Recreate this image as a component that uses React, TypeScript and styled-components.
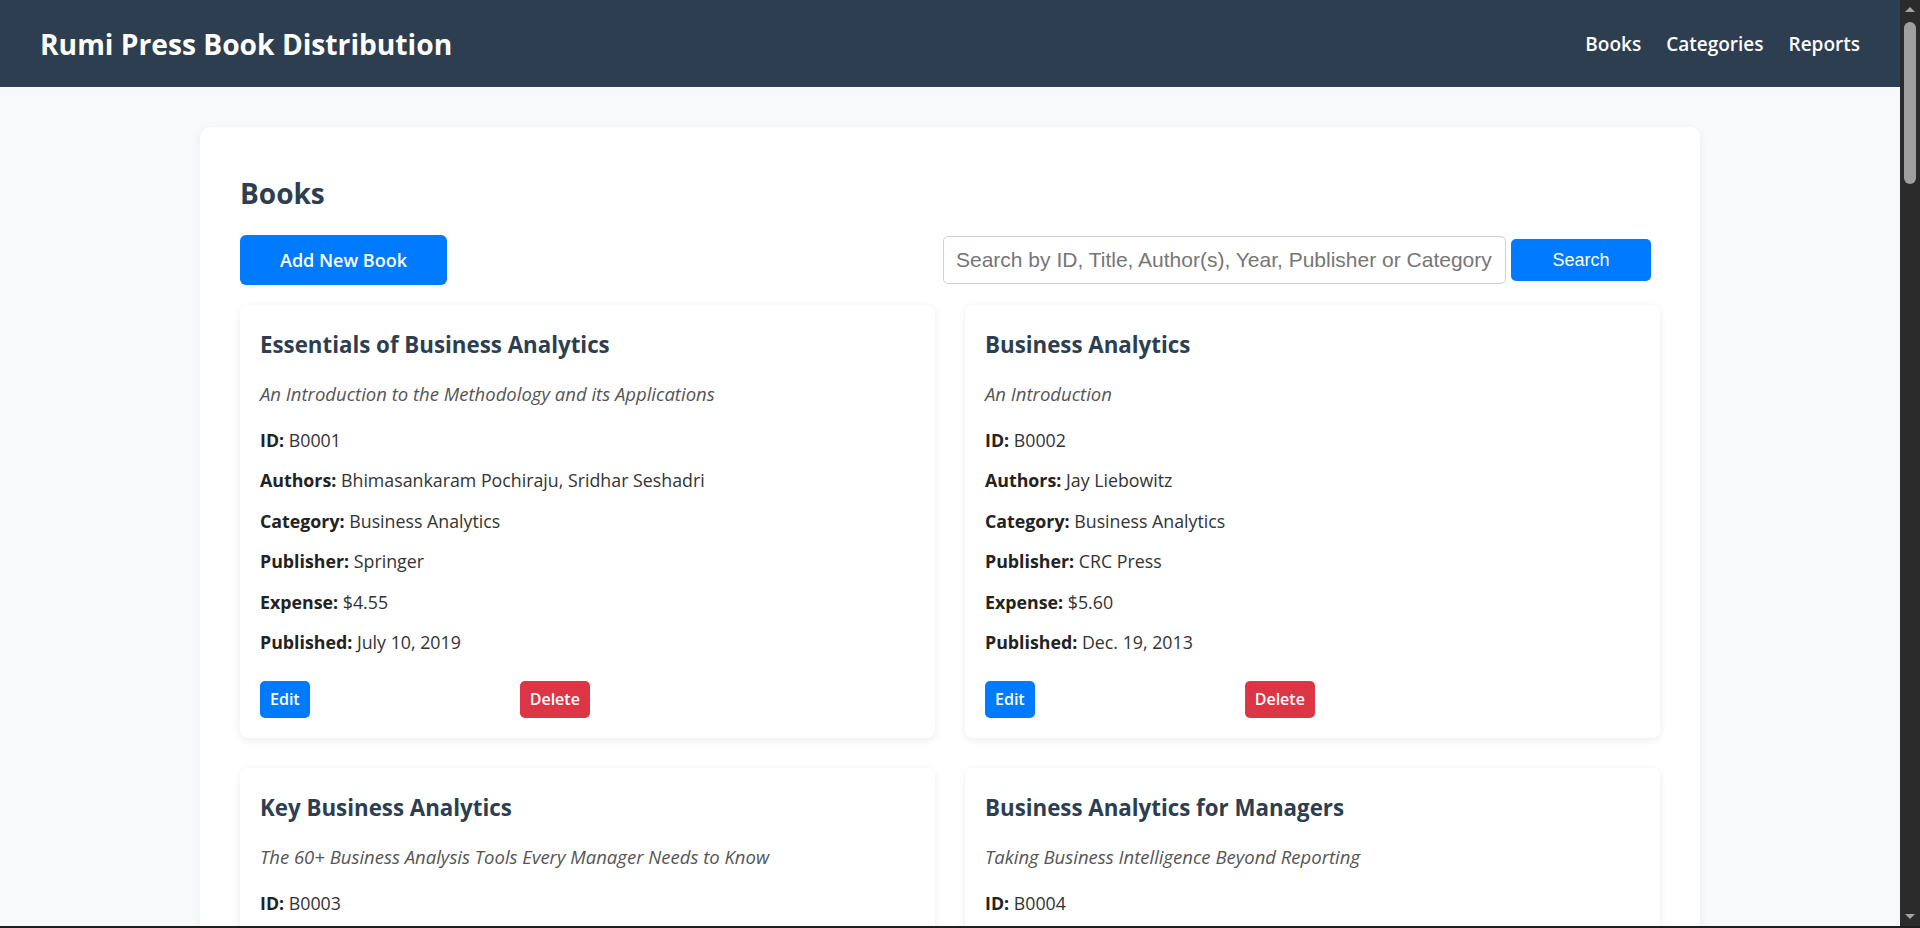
import React from "react";
import styled, { createGlobalStyle } from "styled-components";

const GlobalStyle = createGlobalStyle`
  html, body { margin: 0; padding: 0; }
  body {
    background: #f7f9fb;
    font-family: "Open Sans", "Noto Sans", sans-serif;
    color: #333;
  }
  *, *::before, *::after { box-sizing: border-box; }
`;

type Book = {
  id: string;
  title: string;
  subtitle: string;
  authors: string;
  category: string;
  publisher: string;
  expense: string;
  published: string;
};

const books: Book[] = [
  { id: "B0001", title: "Essentials of Business Analytics", subtitle: "An Introduction to the Methodology and its Applications", authors: "Bhimasankaram Pochiraju, Sridhar Seshadri", category: "Business Analytics", publisher: "Springer", expense: "4.55", published: "July 10, 2019" },
  { id: "B0002", title: "Business Analytics", subtitle: "An Introduction", authors: "Jay Liebowitz", category: "Business Analytics", publisher: "CRC Press", expense: "5.60", published: "Dec. 19, 2013" },
  { id: "B0003", title: "Key Business Analytics", subtitle: "The 60+ Business Analysis Tools Every Manager Needs to Know", authors: "Bernard Marr", category: "Business Analytics", publisher: "Pearson UK", expense: "6.10", published: "Feb. 4, 2016" },
  { id: "B0004", title: "Business Analytics for Managers", subtitle: "Taking Business Intelligence Beyond Reporting", authors: "Gert Laursen, Jesper Thorlund", category: "Business Analytics", publisher: "John Wiley & Sons", expense: "3.89", published: "Oct. 3, 2016" },
  { id: "B0005", title: "Data Science for Business", subtitle: "What You Need to Know about Data Mining and Data-Analytic Thinking", authors: "Foster Provost, Tom Fawcett", category: "Data Science", publisher: "O'Reilly Media", expense: "7.20", published: "July 27, 2013" },
  { id: "B0006", title: "Python for Data Analysis", subtitle: "Data Wrangling with Pandas, NumPy, and IPython", authors: "Wes McKinney", category: "Data Science", publisher: "O'Reilly Media", expense: "8.15", published: "Oct. 20, 2017" },
  { id: "B0007", title: "Storytelling with Data", subtitle: "A Data Visualization Guide for Business Professionals", authors: "Cole Nussbaumer Knaflic", category: "Data Visualization", publisher: "John Wiley & Sons", expense: "5.25", published: "Nov. 2, 2015" },
  { id: "B0008", title: "Competing on Analytics", subtitle: "The New Science of Winning", authors: "Thomas H. Davenport, Jeanne G. Harris", category: "Business Analytics", publisher: "Harvard Business Press", expense: "4.75", published: "March 6, 2007" },
  { id: "B0009", title: "Predictive Analytics", subtitle: "The Power to Predict Who Will Click, Buy, Lie, or Die", authors: "Eric Siegel", category: "Data Science", publisher: "John Wiley & Sons", expense: "6.40", published: "Feb. 19, 2013" },
  { id: "B0010", title: "Data Mining", subtitle: "Practical Machine Learning Tools and Techniques", authors: "Ian H. Witten, Eibe Frank, Mark A. Hall", category: "Data Science", publisher: "Morgan Kaufmann", expense: "9.05", published: "Jan. 20, 2011" },
  { id: "B0011", title: "The Visual Display of Quantitative Information", subtitle: "Second Edition", authors: "Edward R. Tufte", category: "Data Visualization", publisher: "Graphics Press", expense: "7.80", published: "Jan. 1, 2001" },
  { id: "B0012", title: "Big Data", subtitle: "A Revolution That Will Transform How We Live, Work, and Think", authors: "Viktor Mayer-Schönberger, Kenneth Cukier", category: "Big Data", publisher: "Houghton Mifflin Harcourt", expense: "3.95", published: "March 5, 2013" },
  { id: "B0013", title: "Business Intelligence Guidebook", subtitle: "From Data Integration to Analytics", authors: "Rick Sherman", category: "Business Intelligence", publisher: "Morgan Kaufmann", expense: "6.85", published: "Nov. 4, 2014" },
  { id: "B0014", title: "Marketing Analytics", subtitle: "Data-Driven Techniques with Microsoft Excel", authors: "Wayne L. Winston", category: "Marketing", publisher: "John Wiley & Sons", expense: "5.45", published: "Jan. 13, 2014" },
  { id: "B0015", title: "Naked Statistics", subtitle: "Stripping the Dread from the Data", authors: "Charles Wheelan", category: "Statistics", publisher: "W. W. Norton & Company", expense: "2.90", published: "Jan. 7, 2013" },
  { id: "B0016", title: "An Introduction to Statistical Learning", subtitle: "with Applications in R", authors: "Gareth James, Daniela Witten, Trevor Hastie, Robert Tibshirani", category: "Statistics", publisher: "Springer", expense: "8.60", published: "June 24, 2013" },
  { id: "B0017", title: "Data Smart", subtitle: "Using Data Science to Transform Information into Insight", authors: "John W. Foreman", category: "Data Science", publisher: "John Wiley & Sons", expense: "4.30", published: "Nov. 4, 2013" },
  { id: "B0018", title: "Lean Analytics", subtitle: "Use Data to Build a Better Startup Faster", authors: "Alistair Croll, Benjamin Yoskovitz", category: "Business Analytics", publisher: "O'Reilly Media", expense: "5.10", published: "March 21, 2013" },
  { id: "B0019", title: "Analytics at Work", subtitle: "Smarter Decisions, Better Results", authors: "Thomas H. Davenport, Jeanne G. Harris, Robert Morison", category: "Business Analytics", publisher: "Harvard Business Press", expense: "4.65", published: "Feb. 8, 2010" },
  { id: "B0020", title: "Data Analytics Made Accessible", subtitle: "A Practical Guide", authors: "Anil Maheshwari", category: "Business Analytics", publisher: "Lake Union", expense: "3.40", published: "May 1, 2014" },
];

const Page = styled.div`
  margin-right: 20px;
`;

const Header = styled.header`
  height: 87px;
  background: #2c3e50;
  display: flex;
  align-items: center;
  justify-content: space-between;
  padding: 0 40px;
`;

const Brand = styled.h1`
  margin: 0;
  color: #ffffff;
  font-size: 28.2px;
  font-weight: 700;
  line-height: 38px;
`;

const Nav = styled.nav`
  display: flex;
  align-items: center;
  gap: 25px;
`;

const NavLink = styled.a`
  color: #ffffff;
  font-size: 19px;
  font-weight: 600;
  text-decoration: none;
  line-height: 26px;
`;

const Main = styled.main`
  max-width: 1500px;
  margin: 40px auto 40px;
`;

const Panel = styled.section`
  background: #ffffff;
  border-radius: 10px;
  box-shadow: 0 2px 10px rgba(0, 0, 0, 0.05);
  padding: 40px;
`;

const PageTitle = styled.h2`
  margin: 7px 0 0;
  font-size: 28px;
  font-weight: 700;
  line-height: 38px;
  color: #2c3e50;
`;

const Toolbar = styled.div`
  display: flex;
  align-items: center;
  justify-content: space-between;
  margin-top: 23px;
  height: 50px;
`;

const PrimaryButton = styled.button`
  height: 50px;
  padding: 0 40px;
  border: none;
  border-radius: 6px;
  background: #007bff;
  color: #ffffff;
  font-family: "Open Sans", sans-serif;
  font-size: 18px;
  font-weight: 600;
  cursor: pointer;
`;

const SearchForm = styled.form`
  display: flex;
  align-items: center;
  gap: 5px;
  margin-right: 9px;
`;

const SearchInput = styled.input`
  width: 563px;
  height: 48px;
  padding: 0 3px 0 12px;
  border: 1px solid #d0d0d5;
  border-radius: 5px;
  font-family: "Liberation Sans", Arial, sans-serif;
  font-size: 21px;
  color: #333;
  outline: none;
  &::placeholder { color: #767676; }
`;

const SearchButton = styled.button`
  width: 140px;
  height: 42px;
  border: none;
  border-radius: 5px;
  background: #007bff;
  color: #ffffff;
  font-family: "Liberation Sans", Arial, sans-serif;
  font-size: 18px;
  cursor: pointer;
`;

const Grid = styled.div`
  display: grid;
  grid-template-columns: 1fr 1fr;
  gap: 30px;
  margin-top: 20px;
`;

const BookCard = styled.article`
  background: #ffffff;
  border-radius: 8px;
  box-shadow: 0 2px 8px rgba(0, 0, 0, 0.08);
  padding: 20px;
`;

const BookTitle = styled.h3`
  margin: 5px 0 0;
  font-size: 22.3px;
  font-weight: 700;
  line-height: 30px;
  color: #2c3e50;
`;

const Subtitle = styled.p`
  margin: 22px 0 0;
  font-size: 18.5px;
  font-style: italic;
  line-height: 24px;
  color: #555;
`;

const Details = styled.div`
  display: flex;
  flex-direction: column;
  gap: 16.4px;
  margin-top: 22px;
`;

const Detail = styled.p`
  margin: 0;
  font-size: 17.8px;
  line-height: 24px;
  color: #333;
`;

const Label = styled.strong`
  font-weight: 700;
  color: #222;
`;

const Actions = styled.div`
  display: flex;
  align-items: center;
  gap: 210px;
  margin-top: 27px;
`;

const SmallButton = styled.button<{ $variant: "edit" | "delete" }>`
  height: 37px;
  padding: 0 10px;
  border: none;
  border-radius: 5px;
  background: ${(p) => (p.$variant === "edit" ? "#007bff" : "#dc3545")};
  color: #ffffff;
  font-family: "Open Sans", sans-serif;
  font-size: 16px;
  font-weight: 600;
  cursor: pointer;
`;

const ScrollRail = styled.div`
  position: fixed;
  top: 0;
  right: 0;
  bottom: 0;
  width: 20px;
  background: #2b2b2b;
  display: flex;
  flex-direction: column;
  align-items: center;
  padding: 7px 0 9px;
  z-index: 5;
`;

const Arrow = styled.div<{ $dir: "up" | "down" }>`
  width: 0;
  height: 0;
  border-left: 5px solid transparent;
  border-right: 5px solid transparent;
  ${(p) =>
    p.$dir === "up"
      ? "border-bottom: 5px solid #a3a3a3;"
      : "border-top: 5px solid #a3a3a3; margin-top: auto;"}
`;

const Thumb = styled.div`
  width: 12px;
  height: 162px;
  margin-top: 10px;
  border-radius: 6px;
  background: #9f9f9f;
`;

const WindowEdge = styled.div`
  position: fixed;
  left: 0;
  right: 0;
  bottom: 0;
  height: 2px;
  background: #1f1f1f;
  z-index: 10;
`;

export default function App() {
  return (
    <>
      <GlobalStyle />
      <Page>
        <Header>
          <Brand>Rumi Press Book Distribution</Brand>
          <Nav>
            <NavLink href="#">Books</NavLink>
            <NavLink href="#">Categories</NavLink>
            <NavLink href="#">Reports</NavLink>
          </Nav>
        </Header>
        <Main>
          <Panel>
            <PageTitle>Books</PageTitle>
            <Toolbar>
              <PrimaryButton type="button">Add New Book</PrimaryButton>
              <SearchForm onSubmit={(e) => e.preventDefault()}>
                <SearchInput placeholder="Search by ID, Title, Author(s), Year, Publisher or Category" />
                <SearchButton type="submit">Search</SearchButton>
              </SearchForm>
            </Toolbar>
            <Grid>
              {books.map((b) => (
                <BookCard key={b.id}>
                  <BookTitle>{b.title}</BookTitle>
                  <Subtitle>{b.subtitle}</Subtitle>
                  <Details>
                    <Detail><Label>ID:</Label> {b.id}</Detail>
                    <Detail><Label>Authors:</Label> {b.authors}</Detail>
                    <Detail><Label>Category:</Label> {b.category}</Detail>
                    <Detail><Label>Publisher:</Label> {b.publisher}</Detail>
                    <Detail><Label>Expense:</Label> ${b.expense}</Detail>
                    <Detail><Label>Published:</Label> {b.published}</Detail>
                  </Details>
                  <Actions>
                    <SmallButton $variant="edit">Edit</SmallButton>
                    <SmallButton $variant="delete">Delete</SmallButton>
                  </Actions>
                </BookCard>
              ))}
            </Grid>
          </Panel>
        </Main>
      </Page>
      <ScrollRail aria-hidden="true">
        <Arrow $dir="up" />
        <Thumb />
        <Arrow $dir="down" />
      </ScrollRail>
      <WindowEdge />
    </>
  );
}
